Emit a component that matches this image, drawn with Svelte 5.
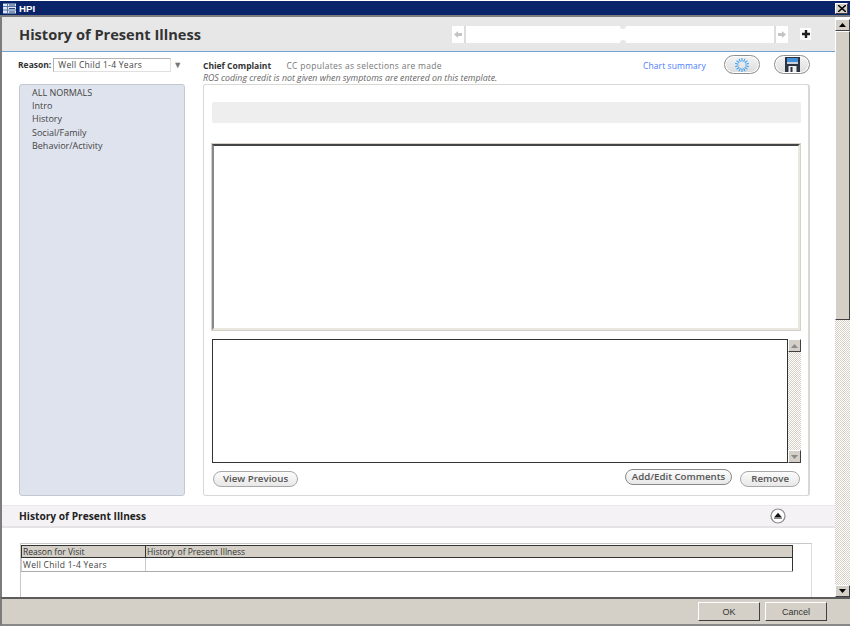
<script>
	const navItems = ['ALL NORMALS', 'Intro', 'History', 'Social/Family', 'Behavior/Activity'];
	const spokes = Array.from({ length: 14 }, (_, i) => (i * 360) / 14);
</script>

{#snippet arrow(dir)}
	<svg class="arrow" viewBox="0 0 7 4" width="7" height="4" style:transform={dir === 'down' ? 'rotate(180deg)' : null}>
		<path d="M3.500 0 7 4H0z" />
	</svg>
{/snippet}

<div class="window">
	<div class="titlebar">
		<svg class="app-icon" viewBox="0 0 13 11" width="13" height="11">
			<rect width="13" height="11" fill="#dfe6f2" />
			<path d="M0 .5h13M0 3.500h13M0 7h13M0 10.500h13M4.500 0v11" stroke="#5a78a8" fill="none" />
			<path d="M6 2h6M6 5.500h6M6 9h6" stroke="#24457c" fill="none" />
		</svg>
		<span class="title">HPI</span>
		<button class="close" aria-label="Close">
			<svg viewBox="0 0 8 7" width="8" height="7"><path d="M0 0l8 7M8 0L0 7" stroke="#000" stroke-width="1.5" /></svg>
		</button>
	</div>

	<div class="frame">
		<div class="page">
			<header class="page-head">
				<h1>History of Present Illness</h1>
				<div class="carousel">
					<span class="nudge">
						<svg viewBox="0 0 8 7" width="8" height="7"><path d="M0 3.500 4 0v2h4v3H4v2z" fill="#c4c4c4" /></svg>
					</span>
					<div class="track">
						<span class="notch top"></span>
						<span class="notch bottom"></span>
					</div>
					<span class="nudge">
						<svg viewBox="0 0 8 7" width="8" height="7"><path d="M8 3.500 4 0v2H0v3h4v2z" fill="#c4c4c4" /></svg>
					</span>
				</div>
				<span class="add">
					<svg viewBox="0 0 8 8" width="8" height="8"><path d="M4 0v8M0 4h8" stroke="#222" stroke-width="2.400" /></svg>
				</span>
			</header>

			<div class="columns">
				<aside class="left">
					<div class="reason">
						<b>Reason:</b>
						<span class="select">Well Child 1-4 Years</span>
						<span class="caret">▼</span>
					</div>
					<nav class="nav-panel">
						{#each navItems as item}
							<div>{item}</div>
						{/each}
					</nav>
				</aside>

				<section class="right">
					<div class="cc-row">
						<div class="cc-text">
							<div class="cc-line">
								<b>Chief Complaint</b>
								<span>CC populates as selections are made</span>
							</div>
							<em>ROS coding credit is not given when symptoms are entered on this template.</em>
						</div>
						<a class="summary" href="#summary">Chart summary</a>
						<span class="pill">
							<svg viewBox="0 0 16 16" width="16" height="16">
								{#each spokes as angle}
									<line x1="8" y1="1" x2="8" y2="4.500" stroke="#45a5f0" stroke-width="1.200" transform="rotate({angle} 8 8)" />
								{/each}
							</svg>
						</span>
						<span class="pill">
							<svg viewBox="0 0 15 15" width="15" height="15">
								<path d="M0 0h15v15H0z" fill="#2b3440" />
								<path d="M2 1h11v4H2z" fill="#3f8fd8" />
								<path d="M2 5h11v2H2z" fill="#c9d2da" />
								<path d="M3.500 9h8v6h-8z" fill="#eeeeee" />
								<path d="M5.500 10h2v5h-2z" fill="#2b3440" />
							</svg>
						</span>
					</div>

					<div class="editor">
						<div class="strip"></div>
						<div class="sunken"></div>
						<div class="comment-box">
							<div class="comment-text"></div>
							<div class="mini-scroll">
								<span class="btn-arrow faded">{@render arrow('up')}</span>
								<span class="dither"></span>
								<span class="btn-arrow faded">{@render arrow('down')}</span>
							</div>
						</div>
						<div class="actions">
							<button class="round">View Previous</button>
							<button class="round raised">Add/Edit Comments</button>
							<button class="round remove">Remove</button>
						</div>
					</div>
				</section>
			</div>

			<div class="section-bar">
				<b>History of Present Illness</b>
				<span class="collapse">
					<svg viewBox="0 0 16 16" width="16" height="16">
						<circle cx="8" cy="8" r="7" fill="#fff" stroke="#8a8a8a" stroke-width="1.200" />
						<path d="M8 4.800 12 9.500H4z" fill="#111" />
						<path d="M4 10.500h8" stroke="#888" />
					</svg>
				</span>
			</div>

			<div class="table-wrap">
				<table>
					<thead>
						<tr><th class="col-a">Reason for Visit</th><th>History of Present Illness</th></tr>
					</thead>
					<tbody>
						<tr><td>Well Child 1-4 Years</td><td></td></tr>
					</tbody>
				</table>
			</div>
		</div>

		<div class="scrollbar">
			<span class="btn-arrow">{@render arrow('up')}</span>
			<span class="thumb"></span>
			<span class="dither"></span>
			<span class="btn-arrow">{@render arrow('down')}</span>
		</div>
	</div>

	<footer class="footer">
		<button class="win-btn">OK</button>
		<button class="win-btn">Cancel</button>
	</footer>
</div>

<style>
	:global(body) {
		margin: 0;
		background: #fff;
	}

	.window {
		width: 850px;
		height: 626px;
		display: flex;
		flex-direction: column;
		overflow: hidden;
		font-family: 'Open Sans', 'Noto Sans', sans-serif;
		font-size: 9px;
		color: #444;
	}

	.titlebar {
		height: 14px;
		flex: none;
		margin-top: 1px;
		background: #0a246a;
		display: flex;
		align-items: center;
		padding-left: 3px;
		color: #fff;
	}

	.title {
		margin-left: 3px;
		font: bold 9.700px 'Liberation Sans', sans-serif;
	}

	.close {
		margin-left: auto;
		margin-right: 2px;
		width: 13px;
		height: 11px;
		padding: 0;
		border: 1px solid;
		border-color: #fff #404040 #404040 #fff;
		background: #d4d0c8;
		display: flex;
		align-items: center;
		justify-content: center;
	}

	.frame {
		height: 582px;
		flex: none;
		display: flex;
		border-top: 2px solid #7c7c7c;
		border-left: 2px solid #7c7c7c;
		box-sizing: border-box;
	}

	.page {
		flex: 1;
		min-width: 0;
		overflow: hidden;
		background: #fff;
	}

	.page-head {
		height: 35px;
		box-sizing: border-box;
		border-bottom: 1px solid #6ea3d3;
		background: #e7e7e7;
		display: flex;
		align-items: center;
		padding-left: 17px;
	}

	h1 {
		margin: 0;
		width: 433px;
		font-size: 14.600px;
		font-weight: 700;
		color: #333;
		white-space: nowrap;
	}

	.carousel {
		width: 336px;
		height: 17px;
		display: flex;
		background: #fff;
	}

	.nudge {
		width: 12px;
		flex: none;
		display: flex;
		align-items: center;
		justify-content: center;
	}

	.track {
		flex: 1;
		border: solid #dcdcdc;
		border-width: 0 2px;
		position: relative;
		overflow: hidden;
	}

	.notch {
		position: absolute;
		left: 154px;
		width: 6px;
		height: 6px;
		border-radius: 50%;
		background: #e7e7e7;
	}

	.notch.top {
		top: -3px;
	}

	.notch.bottom {
		bottom: -3px;
	}

	.add {
		width: 11px;
		height: 12px;
		margin-left: 12px;
		background: #fff;
		display: flex;
		align-items: center;
		justify-content: center;
	}

	.columns {
		display: flex;
		gap: 18px;
		padding-left: 17px;
		height: 444px;
	}

	.left {
		width: 166px;
		flex: none;
		display: flex;
		flex-direction: column;
	}

	.reason {
		height: 32px;
		box-sizing: border-box;
		padding-top: 6px;
		display: flex;
		align-items: flex-start;
		line-height: 14px;
	}

	.reason b {
		color: #333;
		font-size: 8.500px;
		margin: 0 2px 0 -1px;
		white-space: nowrap;
	}

	.select {
		width: 118px;
		height: 14px;
		flex: none;
		box-sizing: border-box;
		border: 1px solid #b4b4b4;
		border-bottom-color: #e0e0e0;
		border-right-color: #e0e0e0;
		padding-left: 4px;
		line-height: 12px;
		font-size: 8.500px;
		letter-spacing: 0.3px;
		white-space: nowrap;
	}

	.caret {
		margin-left: 2px;
		color: #777;
		font-size: 9px;
	}

	.nav-panel {
		height: 412px;
		box-sizing: border-box;
		background: #dfe3ee;
		border: 1px solid #c2c8d0;
		border-radius: 3px;
		padding: 1px 0 0 12px;
		line-height: 13.200px;
		color: #444;
	}

	.right {
		width: 607px;
		flex: none;
		display: flex;
		flex-direction: column;
	}

	.cc-row {
		height: 32px;
		display: flex;
		align-items: flex-start;
		padding-top: 7px;
		box-sizing: border-box;
	}

	.cc-text {
		width: 440px;
		line-height: 13px;
		white-space: nowrap;
	}

	.cc-line b {
		color: #333;
		font-size: 8.500px;
		margin-right: 13px;
	}

	.cc-line span {
		color: #777;
		font-size: 8.500px;
		letter-spacing: 0.3px;
	}

	em {
		color: #666;
		font-size: 8.800px;
		display: block;
	}

	.summary {
		color: #4a7dff;
		text-decoration: none;
		font-size: 8.500px;
		letter-spacing: 0.1px;
		line-height: 13px;
		width: 81px;
		white-space: nowrap;
	}

	.pill {
		width: 36px;
		height: 19px;
		box-sizing: border-box;
		margin-top: -4px;
		border: 1px solid #8e8e8e;
		border-radius: 10px;
		background: linear-gradient(#f4f4f4, #dcdcdc);
		box-shadow: inset 0 0 0 1px #fff;
		display: flex;
		align-items: center;
		justify-content: center;
	}

	.pill + .pill {
		margin-left: 14px;
	}

	.editor {
		height: 412px;
		box-sizing: border-box;
		border: 1px solid #d8d8d4;
		border-width: 1px 2px 1px 1px;
		border-radius: 3px;
		padding: 17px 7px 0 8px;
		display: flex;
		flex-direction: column;
	}

	.strip {
		height: 21px;
		background: #eeeeee;
		border-radius: 2px;
		flex: none;
	}

	.sunken {
		height: 186px;
		margin: 21px 1px 0 0;
		box-sizing: border-box;
		border: 2px solid;
		border-color: #444 #e8e8e0 #e8e8e0 #888;
		outline: 1px solid #d4d0c8;
		flex: none;
	}

	.comment-box {
		height: 124px;
		margin-top: 9px;
		flex: none;
		display: flex;
	}

	.comment-text {
		flex: 1;
		border: 1px solid #333;
		border-right: 0;
	}

	.mini-scroll {
		width: 13px;
		display: flex;
		flex-direction: column;
		border-left: 1px solid #333;
	}

	.dither {
		flex: 1;
		background: repeating-conic-gradient(#d4d0c8 0 25%, #fff 0 50%) 0 0 / 2px 2px;
	}

	.btn-arrow {
		flex: none;
		height: 13px;
		box-sizing: border-box;
		background: #d4d0c8;
		border: 1px solid;
		border-color: #fff #404040 #404040 #fff;
		display: flex;
		align-items: center;
		justify-content: center;
	}

	.arrow path {
		fill: #000;
	}

	.faded .arrow path {
		fill: #8a8a8a;
	}

	.actions {
		display: flex;
		align-items: flex-start;
		padding: 8px 1px 0 1px;
	}

	.round {
		height: 16px;
		padding: 0 9px;
		border: 1px solid #a8a8a8;
		border-radius: 8px;
		background: linear-gradient(#fbfbfb, #e8e8e8);
		font: 600 9.700px 'Open Sans', sans-serif;
		color: #555;
		line-height: 12px;
		white-space: nowrap;
	}

	.raised {
		margin: -2px 0 0 auto;
		border-color: #888;
		padding: 0 6px;
	}

	.remove {
		margin-left: 8px;
		padding: 0 10px;
	}

	.section-bar {
		height: 23px;
		margin-top: 9px;
		box-sizing: border-box;
		border-top: 1px solid #e8e8e8;
		border-bottom: 2px solid #e4e4e4;
		background: #f5f2f6;
		padding-left: 17px;
		display: flex;
		align-items: center;
		font-size: 10.200px;
		color: #222;
	}

	.collapse {
		margin-left: 624px;
		display: flex;
	}

	.table-wrap {
		height: 60px;
		margin: 15px 0 0 18px;
		width: 792px;
		box-sizing: border-box;
		border: 1px solid #c8c8c8;
		border-bottom: 0;
		border-right-color: #dcdcdc;
		padding-top: 1px;
	}

	table {
		width: 772px;
		border-collapse: collapse;
		table-layout: fixed;
		font-size: 8.500px;
	}

	th {
		height: 11px;
		padding: 0 0 0 1px;
		background: #d4d0c8;
		border: 1px solid #333;
		font-weight: 400;
		text-align: left;
		line-height: 11px;
		color: #333;
	}

	.col-a {
		width: 122px;
	}

	td {
		height: 13px;
		padding: 0 0 0 1px;
		border: 1px solid #ccc;
		border-top: 0;
		border-bottom: 1px solid #aaa;
		line-height: 13px;
		letter-spacing: 0.3px;
	}

	td:last-child {
		border-right: 1px solid #333;
	}

	.scrollbar {
		width: 15px;
		flex: none;
		display: flex;
		flex-direction: column;
		padding-top: 2px;
		box-sizing: border-box;
	}

	.scrollbar .btn-arrow {
		height: 12px;
	}

	.thumb {
		height: 289px;
		flex: none;
		box-sizing: border-box;
		background: #d4d0c8;
		border: 1px solid;
		border-color: #fff #404040 #404040 #fff;
	}

	.footer {
		flex: 1;
		box-sizing: border-box;
		border-top: 2px solid #5c5c5c;
		border-left: 2px solid #7c7c7c;
		background: #d4d0c8;
		display: flex;
		justify-content: flex-end;
		align-items: flex-start;
		gap: 5px;
		padding: 3px 23px 0 0;
		border-bottom: 2px solid #888;
	}

	.win-btn {
		width: 62px;
		height: 19px;
		padding: 0;
		border: 1px solid;
		border-color: #fff #404040 #404040 #fff;
		background: #d4d0c8;
		font: 9px 'Liberation Sans', sans-serif;
		color: #333;
	}
</style>
